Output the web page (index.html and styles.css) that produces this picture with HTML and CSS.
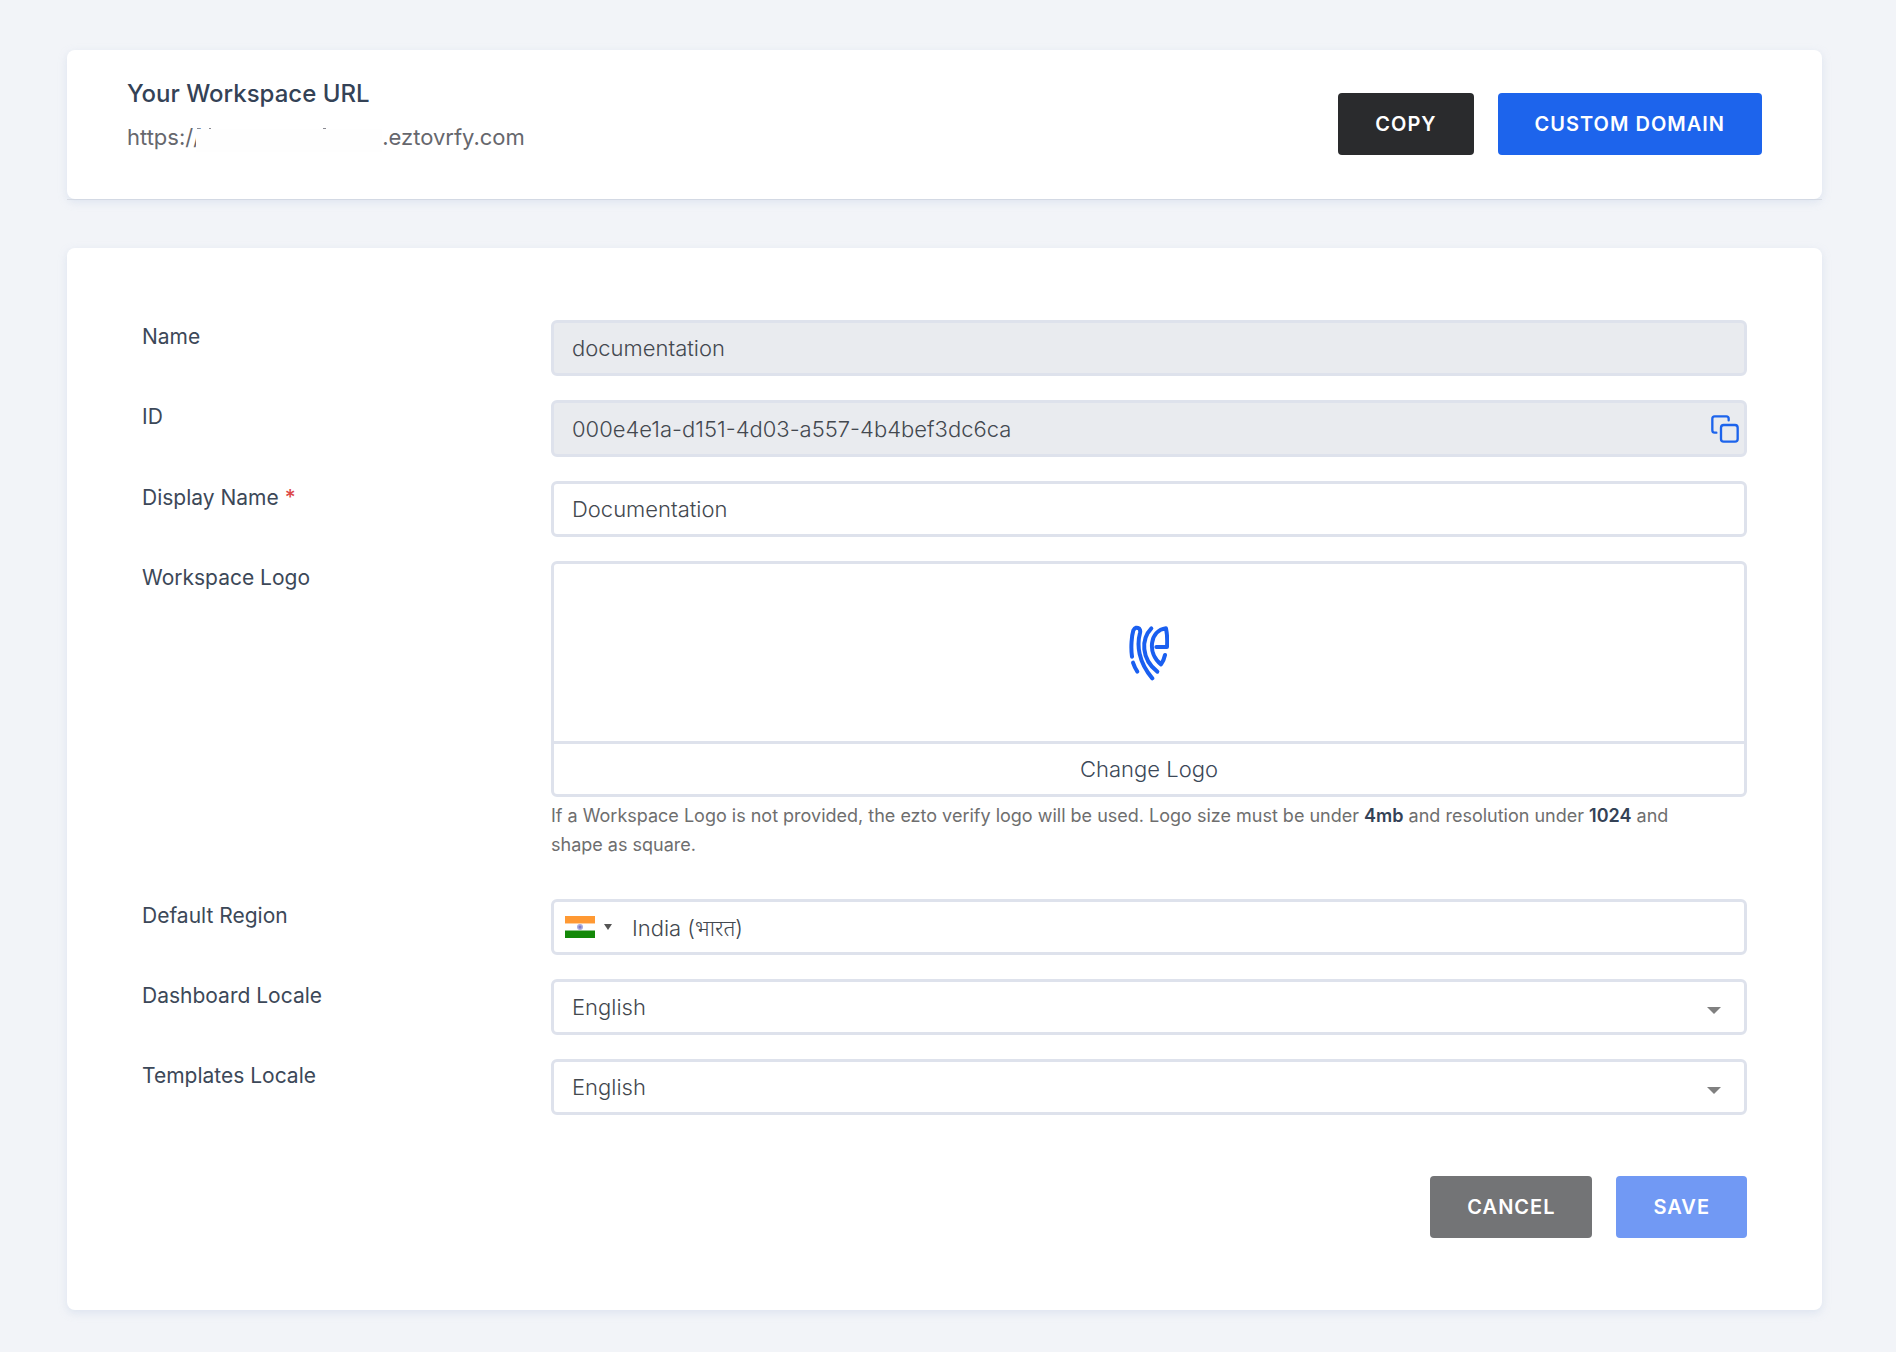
FILE: index.html
```html
<!DOCTYPE html>
<html lang="en">
<head>
<meta charset="utf-8">
<meta name="viewport" content="width=device-width, initial-scale=1">
<title>Workspace settings</title>
<link rel="stylesheet" href="styles.css">
</head>
<body>
<main class="page">
  <div class="url-section">
    <section class="card url-card">
      <div class="url-info">
        <h1 class="url-title">Your Workspace URL</h1>
        <p class="url-value"><span>https://</span><svg class="url-mask" viewBox="0 0 186 24" aria-hidden="true"><rect width="186" height="24" y="1" fill="#fefefe"/><path d="M1 .5h3M13 .5h2M127 .5h3" stroke="#8a8a92"/></svg><span>.eztovrfy.com</span></p>
      </div>
      <div class="url-actions">
        <button class="btn btn-dark" type="button">COPY</button>
        <button class="btn btn-primary" type="button">CUSTOM DOMAIN</button>
      </div>
    </section>
  </div>

  <form class="card form-card">
    <div class="row">
      <label class="label" for="name">Name</label>
      <div class="field field-disabled"><input class="input" id="name" type="text" value="documentation" readonly></div>
    </div>
    <div class="row">
      <label class="label" for="wid">ID</label>
      <div class="field field-disabled field-action">
        <input class="input" id="wid" type="text" value="000e4e1a-d151-4d03-a557-4b4bef3dc6ca" readonly>
        <button class="icon-btn" type="button" aria-label="Copy ID">
          <svg class="copy-icon" viewBox="0 0 84 84" fill="none" stroke="#1d64ec" stroke-width="7" stroke-linecap="round"><rect x="30" y="30" width="50" height="50" rx="8"/><path d="M53 16v-5a7 7 0 0 0-7-7H11a7 7 0 0 0-7 7v35a7 7 0 0 0 7 7h5"/></svg>
        </button>
      </div>
    </div>
    <div class="row">
      <label class="label" for="display">Display Name <span class="required">*</span></label>
      <div class="field"><input class="input" id="display" type="text" value="Documentation" required></div>
    </div>
    <div class="row row-logo">
      <span class="label">Workspace Logo</span>
      <div>
        <div class="logo-box">
          <div class="logo-preview">
            <svg class="logo" viewBox="57 44 120 168" role="img" aria-label="Workspace logo" fill="none" stroke="#1a5ff0" stroke-width="12" stroke-linecap="round" stroke-linejoin="round">
              <path d="M66 139C62 112 65 76 70 60Q77 47 88 55Q92 60 90 68C80 104 85 155 127 204"/>
              <path d="M69 157Q74 172 82 184"/>
              <path d="M124 54C93 86 93 146 142 184"/>
              <path d="M139 110H171Q173 78 168 54C120 60 110 128 153 162Q162 149 165 134"/>
            </svg>
          </div>
          <button class="logo-change" type="button">Change Logo</button>
        </div>
        <p class="help">If a Workspace Logo is not provided, the ezto verify logo will be used. Logo size must be under <strong>4mb</strong> and resolution under <strong>1024</strong> and shape as square.</p>
      </div>
    </div>
    <div class="row">
      <label class="label" for="region">Default Region</label>
      <div class="field">
        <button class="flag-btn" type="button" aria-label="Select country">
          <svg class="flag" viewBox="0 0 30 22"><rect width="30" height="22" fill="#fff"/><rect width="30" height="7" fill="#ff9933"/><rect y="7" width="30" height="1" fill="#ffd0a0"/><rect y="14" width="30" height="1" fill="#8cc48a"/><rect y="15" width="30" height="7" fill="#138808"/><circle cx="15" cy="11" r="3" fill="#aaaade"/><circle cx="15" cy="11" r="1.500" fill="#7e7ecb"/></svg>
          <svg class="flag-caret" viewBox="0 0 8 6"><path d="M0 0h8L4 6z" fill="#555"/></svg>
        </button>
        <input class="input input-region" id="region" type="text" value="India (भारत)">
      </div>
    </div>
    <div class="row">
      <label class="label" for="dash">Dashboard Locale</label>
      <div class="field field-select">
        <select class="input" id="dash"><option>English</option></select>
        <svg class="caret" viewBox="0 0 14 7"><path d="M0 0h14L7 7z" fill="#808080"/></svg>
      </div>
    </div>
    <div class="row">
      <label class="label" for="tpl">Templates Locale</label>
      <div class="field field-select">
        <select class="input" id="tpl"><option>English</option></select>
        <svg class="caret" viewBox="0 0 14 7"><path d="M0 0h14L7 7z" fill="#808080"/></svg>
      </div>
    </div>
    <div class="form-actions">
      <button class="btn btn-dark" type="button" disabled>CANCEL</button>
      <button class="btn btn-primary" type="submit" disabled>SAVE</button>
    </div>
  </form>
</main>
</body>
</html>
```
FILE: styles.css
```css
* { box-sizing: border-box; }
body {
  margin: 0;
  background: #f2f4f8;
  color: #3c4858;
  font-family: Inter, "Noto Sans", sans-serif;
  font-size: 22px;
  line-height: 32px;
}
button, input, select { font: inherit; color: inherit; margin: 0; }
.page { padding: 50px 74px 42px 67px; }
.card {
  background: #fff;
  border-radius: 8px;
  box-shadow: 0 3px 8px rgba(180, 198, 224, .35);
}
.url-section { border-bottom: 1px solid #dddfe5; margin-bottom: 48px; }
.url-card {
  display: flex;
  justify-content: space-between;
  align-items: flex-start;
  padding: 28px 60px 44px;
}
.url-title { margin: 0; font-size: 24px; font-weight: 500; line-height: 32px; color: #344256; }
.url-value { display: flex; margin: 11px 0 0; line-height: 32px; color: #66676d; }
.url-mask { width: 186px; height: 24px; margin: 7px 0 0 -5px; }
.url-actions { display: flex; gap: 24px; padding-top: 15px; }
.btn {
  height: 62px;
  padding: 0 37px;
  border: 0;
  border-radius: 4px;
  color: #fff;
  font-size: 20px;
  font-weight: 600;
  letter-spacing: 1px;
}
.btn-dark { background: #2a2b2d; }
.btn-primary { background: #1d64ec; }
.btn-dark:disabled { background: #737476; }
.btn-primary:disabled { background: #7199f4; }

.form-card { padding: 72px 75px; }
.row {
  display: grid;
  grid-template-columns: 409px minmax(0, 1fr);
  align-items: start;
  margin-bottom: 24px;
}
.label { padding-top: 1px; font-size: 21px; color: #3c4858; }
.required { color: #dc4848; font-weight: 500; }
.field {
  display: flex;
  align-items: center;
  height: 56px;
  border: 3px solid #dee2ec;
  border-radius: 6px;
  color: #43484f;
}
.field-disabled { background: #e9ebef; }
.field-action { height: 57px; }
.input {
  flex: 1;
  min-width: 0;
  height: 50px;
  padding: 0 18px;
  border: 0;
  background: transparent;
  outline: 0;
  font-weight: 300;
}
.input-region { padding-left: 20px; }
.icon-btn { display: flex; padding: 0 5px; border: 0; background: none; }
.copy-icon { width: 28px; height: 28px; }
.flag-btn { display: flex; align-items: center; gap: 9px; padding: 0 0 0 11px; border: 0; background: none; }
.flag { width: 30px; height: 22px; }
.flag-caret { width: 8px; height: 6px; }
.field-select { display: grid; }
.field-select > * { grid-area: 1 / 1; }
.field-select .input { appearance: none; width: 100%; }
.caret { justify-self: end; width: 14px; height: 7px; margin: 7px 23px 0 0; pointer-events: none; }

.logo-box { border: 3px solid #dee2ec; border-radius: 6px; }
.logo-preview { display: flex; align-items: center; justify-content: center; height: 177px; }
.logo { width: 40px; height: 56px; }
.logo-change {
  display: block;
  width: 100%;
  height: 53px;
  border: 0;
  border-top: 3px solid #dee2ec;
  background: none;
  font-weight: 300;
}
.help { margin: 4px 0 0; padding-right: 48px; font-size: 18px; line-height: 29px; color: #6e6e6e; }
.help strong { font-weight: 600; color: #344256; }
.row-logo { margin-bottom: 40px; }
.form-actions { display: flex; justify-content: flex-end; gap: 24px; padding-top: 37px; }
```
